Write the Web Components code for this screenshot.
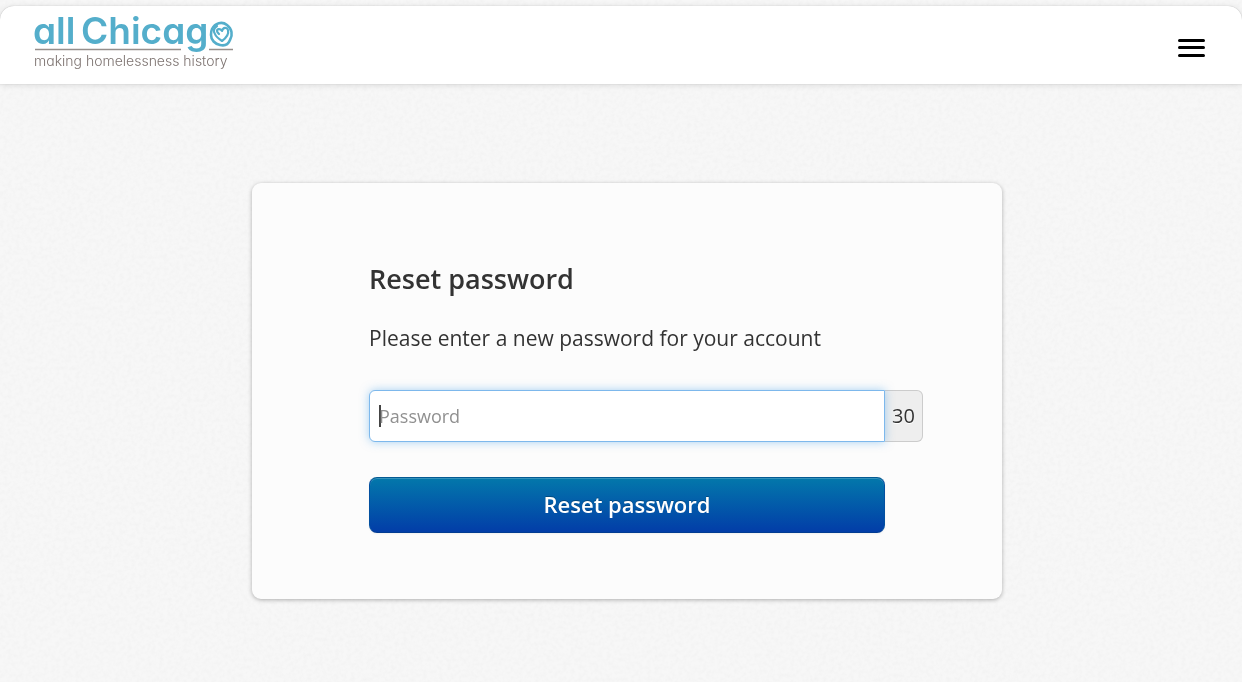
<!DOCTYPE html>
<html lang="en">
<head>
<meta charset="utf-8">
<meta name="viewport" content="width=device-width, initial-scale=1">
<title>Reset password</title>
<style>
    * { box-sizing: border-box; }
    body {
        margin: 0;
        padding-top: 6px;
        min-height: 100vh;
        background: #f5f5f5;
        color: #333;
        font-family: "Open Sans", "Noto Sans", sans-serif;
    }
</style>
</head>
<body>
<page-background></page-background>
<site-header>
    <site-logo></site-logo>
    <menu-button slot="actions"></menu-button>
</site-header>
<main>
    <form-card>
        <span slot="title">Reset password</span>
        <span slot="text">Please enter a new password for your account</span>
        <password-form min-length="30"></password-form>
    </form-card>
</main>

<script>
// Fine paper grain that lies behind the whole page
class PageBackground extends HTMLElement {
    constructor() {
        super();
        this.attachShadow({ mode: 'open' });
        this.shadowRoot.innerHTML = `
            <style>
                :host { display: block; position: fixed; inset: 0; z-index: -1; }
                svg { display: block; width: 100%; height: 100%; }
            </style>
            <svg aria-hidden="true">
                <filter id="grain" x="0" y="0" width="100%" height="100%">
                    <feTurbulence type="fractalNoise" baseFrequency="0.25" numOctaves="3" stitchTiles="stitch"/>
                    <feColorMatrix values="0 0 0 0 0.7  0 0 0 0 0.7  0 0 0 0 0.7  0.3 0 0 0 -0.11"/>
                </filter>
                <rect width="100%" height="100%" fill="#f7f7f7"/>
                <rect width="100%" height="100%" filter="url(#grain)"/>
            </svg>
        `;
    }
}

class SiteHeader extends HTMLElement {
    constructor() {
        super();
        this.attachShadow({ mode: 'open' });
        this.shadowRoot.innerHTML = `
            <style>
                :host { display: block; }
                header {
                    box-sizing: border-box;
                    display: flex;
                    justify-content: space-between;
                    align-items: center;
                    min-height: 78px;
                    padding: 0 35px;
                    background: #fff;
                    border-radius: 14px 14px 0 0;
                    box-shadow: 0 0 1px rgba(0, 0, 0, 0.3), 0 1px 6px rgba(0, 0, 0, 0.12);
                }
            </style>
            <header>
                <slot></slot>
                <slot name="actions"></slot>
            </header>
        `;
    }
}

class SiteLogo extends HTMLElement {
    constructor() {
        super();
        this.attachShadow({ mode: 'open' });
        this.shadowRoot.innerHTML = `
            <style>
                :host { display: block; }
                a { display: block; text-decoration: none; }
                svg { display: block; overflow: visible; }
                text { font-family: Inter, "Open Sans", sans-serif; font-feature-settings: "cv11"; }
                .name { font-size: 37px; font-weight: 600; fill: #54aecb; }
                .tagline { font-size: 14px; font-weight: 300; fill: #7d7370; }
            </style>
            <a href="#" aria-label="All Chicago, making homelessness history">
                <svg width="198" height="60" viewBox="0 0 198 60">
                    <text class="name" y="29"><tspan x="-2">all</tspan> <tspan x="46">Chicag</tspan></text>
                    <g fill="none" stroke="#54aecb" stroke-linecap="round" stroke-linejoin="round">
                        <path stroke-width="2.6" d="M177 14c3-6 10-8 15-4 5 4 6 10 3 15-2 5-6 6-10 5-5-1-9-5-9-10 0-2 0-4 1-6"/>
                        <path stroke-width="2.2" d="M182 11c-3 2-4 5-2 8 1 3 4 5 7 7 4-3 7-7 6-11-1-3-5-3-6 1-2-3-5-2-5 0 0 1 1 2 2 3"/>
                    </g>
                    <path stroke="#968f8c" stroke-width="1.5" d="M0 34.500h146M174 34.500h24"/>
                    <text class="tagline" x="-1" y="51">making homelessness history</text>
                </svg>
            </a>
        `;
    }
}

class MenuButton extends HTMLElement {
    constructor() {
        super();
        this.attachShadow({ mode: 'open' });
        this.shadowRoot.innerHTML = `
            <style>
                :host { display: block; }
                button { display: block; margin: 6px 0 0; padding: 0; border: 0; background: none; cursor: pointer; }
                svg { display: block; }
            </style>
            <button type="button" aria-label="Menu">
                <svg width="31" height="20" viewBox="0 0 31 20">
                    <path stroke="#000" stroke-width="3" stroke-linecap="round" d="M3.500 2.500h24M3.500 9.500h24M3.500 17.500h24"/>
                </svg>
            </button>
        `;
    }
}

class FormCard extends HTMLElement {
    constructor() {
        super();
        this.attachShadow({ mode: 'open' });
        this.shadowRoot.innerHTML = `
            <style>
                :host { display: block; padding: 99px 24px 83px 36px; }
                section {
                    box-sizing: border-box;
                    max-width: 750px;
                    margin: 0 auto;
                    padding: 76px 117px 66px;
                    background: #fcfcfc;
                    border-radius: 9px;
                    box-shadow: 0 1px 4px rgba(0, 0, 0, 0.3);
                }
                h1 { margin: 0; font-size: 27px; line-height: 40px; font-weight: 600; }
                p { margin: 23px 0 36px; font-size: 21px; line-height: 32px; font-weight: 400; }
            </style>
            <section>
                <h1><slot name="title"></slot></h1>
                <p><slot name="text"></slot></p>
                <slot></slot>
            </section>
        `;
    }
}

class PasswordForm extends HTMLElement {
    constructor() {
        super();
        this.attachShadow({ mode: 'open' });
    }

    connectedCallback() {
        this.minLength = parseInt(this.getAttribute('min-length'), 10) || 30;
        this.render();
    }

    render() {
        this.shadowRoot.innerHTML = `
            <style>
                :host { display: block; }
                * { box-sizing: border-box; }
                .field { display: flex; margin: 0 -38px 35px 0; }
                input {
                    position: relative; /* keeps the glow above the counter */
                    flex: 1;
                    min-width: 0;
                    height: 52px;
                    padding: 0 9px;
                    border: 1px solid #ccc;
                    border-radius: 6px 0 0 6px;
                    outline: 0;
                    background: #fff;
                    color: #555;
                    font: 18px "Open Sans", sans-serif;
                }
                input::placeholder { color: #909090; opacity: 1; }
                input:focus {
                    border-color: #7db8ec;
                    box-shadow: 0 0 10px rgba(82, 168, 236, 0.5);
                }
                /* thick caret while the field is still empty */
                input:focus:placeholder-shown {
                    caret-color: transparent;
                    background: #fff linear-gradient(#444, #444) 9px 14px / 2px 22px no-repeat;
                }
                output {
                    width: 38px;
                    border: 1px solid #ccc;
                    border-left: 0;
                    border-radius: 0 6px 6px 0;
                    background: #eee;
                    font-size: 20px;
                    line-height: 50px;
                    text-align: center;
                    text-shadow: 0 1px 0 #fff;
                }
                button {
                    display: block;
                    width: 100%;
                    height: 56px;
                    padding: 0 0 2px;
                    border: 1px solid #034c8c;
                    border-color: #045a92 #0350a0 #023c92;
                    border-radius: 8px;
                    background: linear-gradient(#0378ab, #023da8);
                    box-shadow: inset 0 1px 0 rgba(255, 255, 255, 0.2), 0 1px 2px rgba(0, 0, 0, 0.05);
                    color: #fff;
                    font: 600 22px "Open Sans", sans-serif;
                    text-shadow: 0 -1px 0 rgba(0, 0, 0, 0.25);
                    cursor: pointer;
                }
            </style>
            <form>
                <div class="field">
                    <input id="password" type="password" placeholder="Password" aria-label="Password">
                    <output for="password">${this.minLength}</output>
                </div>
                <button type="submit">Reset password</button>
            </form>
        `;

        const input = this.shadowRoot.querySelector('input');
        const counter = this.shadowRoot.querySelector('output');
        input.addEventListener('input', () => {
            counter.textContent = Math.max(0, this.minLength - input.value.length);
        });
        this.shadowRoot.querySelector('form').addEventListener('submit', (e) => e.preventDefault());
        input.focus();
    }
}

customElements.define('page-background', PageBackground);
customElements.define('site-header', SiteHeader);
customElements.define('site-logo', SiteLogo);
customElements.define('menu-button', MenuButton);
customElements.define('form-card', FormCard);
customElements.define('password-form', PasswordForm);
</script>
</body>
</html>
